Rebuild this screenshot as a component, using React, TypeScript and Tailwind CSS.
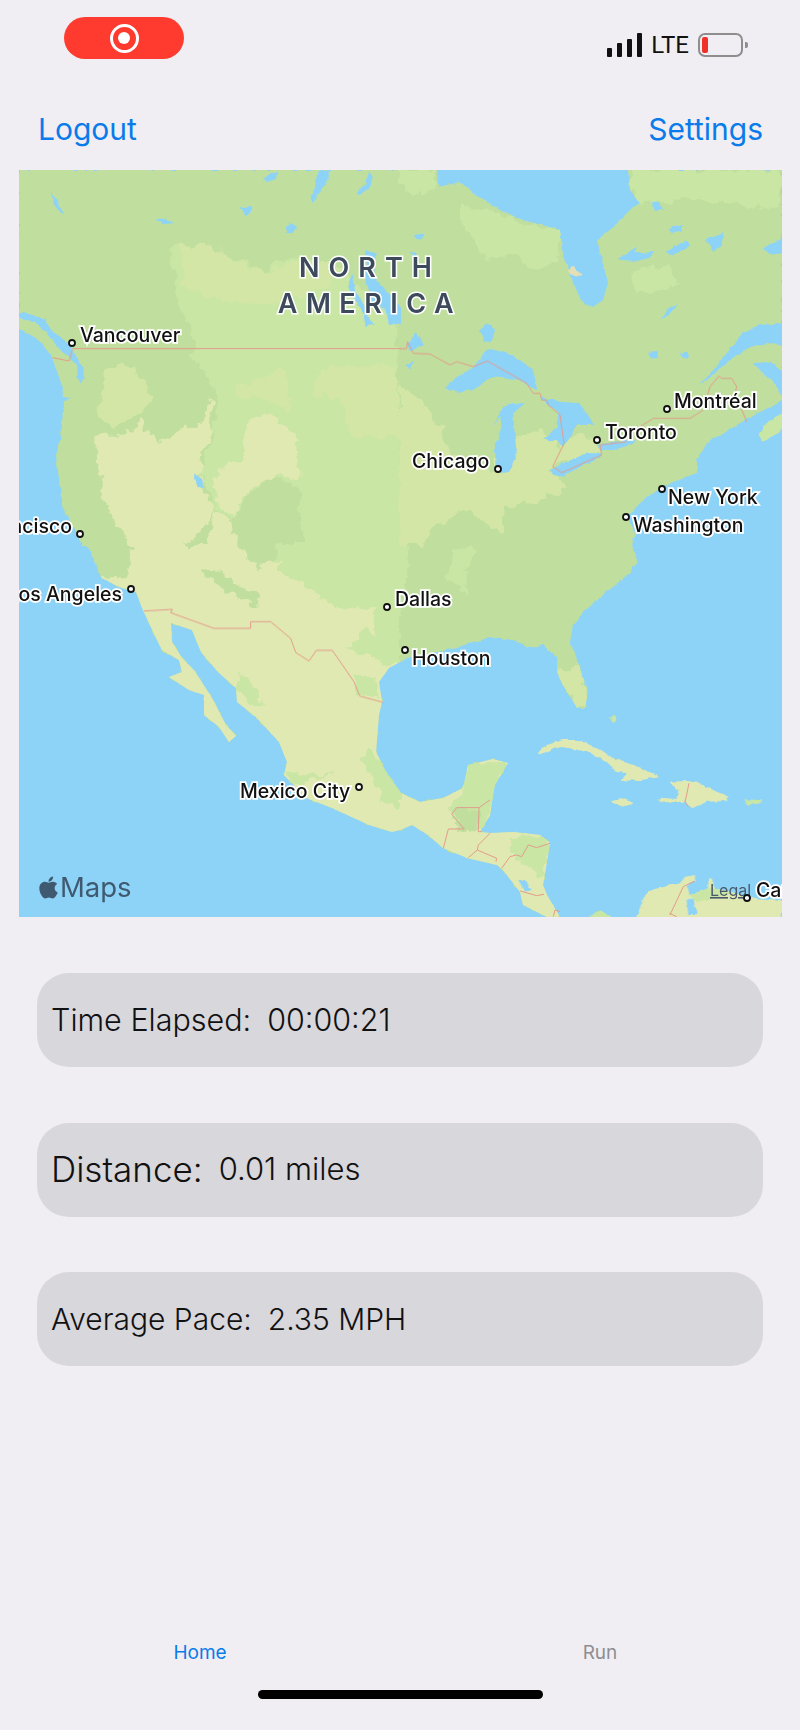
import { FaApple } from 'react-icons/fa';

const FONT = 'font-[Inter,sans-serif]';

const OCEAN = '#8dd3f7';
const BASE = '#c0df9e';
const LIGHT = '#c9e6a5';
const PALE = '#d3e6a6';
const TAN = '#e1e9b2';

// map is 763x747, the point lists below are in 3x crops of each quadrant
const LAND =
  '0,0 763,0 763,230 714,257 688,273 678,290 678,303 658,310 644,317 624,330 608,347 616,363 613,375 619,392 608,405 588,422 568,438 554,455 551,472 561,498 569,522 566,538 558,538 544,515 538,502 538,488 524,475 511,478 494,470 474,467 454,472 438,478 388,488 381,492 370,498 360,512 363,532 360,545 357,582 367,602 382,623 401,632 424,628 444,618 449,595 474,589 489,593 476,615 473,632 471,645 461,662 471,663 494,662 521,665 531,673 528,692 524,715 528,725 541,747 528,747 504,735 501,722 484,700 478,695 448,688 424,678 409,665 393,655 381,660 373,662 350,655 313,638 287,628 265,605 268,592 260,572 237,547 218,532 217,518 200,503 182,482 173,460 152,453 153,472 163,488 175,500 193,528 207,555 217,566 210,572 200,557 185,545 185,525 170,520 150,507 163,502 160,490 143,480 137,468 123,438 117,422 100,417 83,408 68,375 63,375 45,340 41,317 37,285 42,267 45,227 42,213 33,187 20,170 0,158';

const HUDSON =
  '418,0 419,17 441,12 461,28 481,40 504,50 541,60 544,83 554,113 564,133 574,137 584,130 589,113 578,70 591,60 614,37 621,33 611,20 609,0';

const q1Terrain: [string, string][] = [
  [LIGHT, '450,230 480,222 520,235 580,222 600,255 650,268 735,305 770,275 850,262 985,300 1000,340 1130,400 1140,700 1146,1125 850,1125 840,950 760,920 700,960 640,1050 590,1010 540,900 580,800 600,680 520,560 530,535 490,430 470,330 460,270'],
  [PALE, '480,225 580,225 640,270 735,310 850,265 980,295 920,350 780,400 640,400 560,380 490,340'],
  [PALE, '900,590 1130,590 1146,800 1000,800 960,690 880,670'],
  [PALE, '240,740 260,600 300,570 370,620 400,690 350,740 280,770'],
  [PALE, '650,650 740,620 790,590 820,680 810,730 730,680 670,690'],
  [TAN, '680,760 740,730 830,790 840,930 770,915 700,950 640,1040 590,990 590,900 670,870'],
  [TAN, '225,800 250,790 300,800 370,750 420,820 470,790 490,760 530,780 580,680 580,790 540,860 550,950 590,1010 570,1060 500,1125 330,1125 280,1050 250,960 230,820'],
  [TAN, '560,1125 590,1015 640,1055 650,1125'],
  [BASE, '650,1125 680,1000 750,930 800,960 830,1125'],
];

const q2Terrain: [string, string][] = [
  [LIGHT, '0,0 110,0 115,45 60,70 0,60'],
  [LIGHT, '180,100 300,130 400,170 480,190 470,280 400,300 350,250 260,270 180,150'],
  [LIGHT, '690,0 1146,0 1146,120 900,90 720,100 690,60'],
  [LIGHT, '700,300 800,290 840,340 760,370 700,360'],
  [PALE, '0,650 60,680 120,760 150,860 280,900 290,840 350,800 430,780 490,830 480,870 445,900 500,950 400,1000 320,1010 300,1085 200,1020 120,1060 60,1125 0,1125'],
  [PALE, '490,800 590,800 600,850 470,885 480,850'],
];

const q3Terrain: [string, string][] = [
  [LIGHT, '770,0 1146,0 1146,360 980,360 980,320 770,100'],
  [TAN, '340,0 650,0 720,70 790,40 770,90 850,110 950,190 1060,190 1070,270 1030,260 980,320 1060,330 1090,360 1146,350 1146,1125 0,1125 0,100 250,100 320,100'],
  [BASE, '540,80 590,70 680,130 715,140 715,185 640,150 580,110'],
  [LIGHT, '660,375 700,420 740,490 690,480 660,440'],
  [LIGHT, '1010,390 1070,400 1075,450 1020,450'],
  [LIGHT, '1020,640 1060,620 1146,730 1146,800 1100,780 1060,700'],
  [LIGHT, '800,680 950,690 900,700 820,720'],
];

const q4Terrain: [string, string][] = [
  [TAN, '0,640 480,640 480,1125 0,1125'],
  [LIGHT, '200,660 325,650 280,760 265,860 170,840 150,790 190,730'],
  [BASE, '160,800 240,790 235,860 170,850'],
  [LIGHT, '330,880 420,870 450,895 430,1000 380,960 330,930'],
  [PALE, '470,380 540,360 570,490 530,490 480,410'],
  [LIGHT, '160,20 210,0 230,20 190,70 200,150 170,120 140,100'],
  [LIGHT, '0,0 25,0 20,120 0,200'],
];

const q1Water = [
  '0,425 40,435 80,450 95,480 130,505 155,530 190,590 195,620 185,640 175,620 175,590 150,560 115,530 85,490 50,460 0,440',
  '130,680 155,685 135,690',
  '95,68 110,85 135,130 125,130 105,100',
  '410,148 440,145 465,160 430,162',
  '660,110 680,115 705,105 690,135 680,138',
  '800,175 815,160 838,170 815,190 805,188',
  '735,25 755,10 775,8 770,28 745,35',
  '895,5 935,0 925,30 900,70 880,100 875,80 890,45',
  '1010,70 1040,40 1050,5 1062,20 1050,55 1020,75',
  '1040,240 1070,250 1065,320 1100,360 1146,410 1146,460 1110,465 1100,420 1060,400 1040,340',
  '985,350 1000,310 1010,360 1040,420 1065,465 1040,468 1030,420 995,370',
  '525,910 545,925 555,955 535,950',
];

const q2Water = [
  '135,655 165,625 220,590 265,535 340,555 400,600 412,660 390,650 360,630 300,620 260,630 220,660 175,665',
  '310,710 345,700 375,700 340,730 345,800 350,850 330,900 310,912 287,900 285,830 305,780 300,740 280,765',
  '420,680 480,695 540,700 582,765 530,765 520,790 490,830 470,810 430,810 470,770 475,730 440,700',
  '450,900 500,875 560,850 605,850 600,865 540,890 490,920 460,915',
  '590,825 640,815 710,810 690,825 640,840 600,840',
  '240,480 262,460 285,480 275,515 250,515',
  '20,520 50,490 70,525 40,540 30,545',
  '15,590 45,570 30,595',
  '45,195 75,190 65,208 50,208',
  '30,245 50,250 40,262',
  '755,95 775,95 792,120 765,120',
  '805,175 850,165 845,185 815,190',
  '800,245 860,210 870,230 830,250 810,255',
  '655,265 710,230 705,250 770,245 745,265 700,275 660,272',
  '915,210 970,190 965,225 940,245',
  '1090,235 1135,210 1146,200 1146,250 1105,255',
  '785,450 805,415 835,400 810,430',
  '745,550 770,545 775,565 750,565',
  '840,550 860,545 868,565 850,565',
  '890,650 940,600 980,550 1030,490 1080,465 1146,460 1146,530 1120,520 1050,530 990,570 930,620',
  '1060,580 1110,575 1146,600 1146,680 1125,640 1090,610',
  '1000,770 1040,755 1146,690 1146,730 1100,760 1075,790 1000,800',
];

const islands: [string, string][] = [
  ['#e5dfb5', '500,300 520,290 545,315 525,320'],
  [LIGHT, '1075,790 1100,760 1146,730 1146,780 1100,810 1085,815'],
];

const q4Land: [string, string][] = [
  [TAN, '410,625 440,600 490,585 540,585 600,615 640,640 700,660 770,690 775,697 720,705 660,708 680,685 650,680 620,650 560,620 510,610 470,605 420,628'],
  [TAN, '805,710 860,708 890,710 950,740 988,755 980,768 920,770 880,790 855,770 800,772 770,765 780,758 830,762 835,735'],
  [TAN, '630,765 665,760 702,775 670,785 640,775'],
  [LIGHT, '1030,763 1085,765 1085,775 1040,780'],
  [LIGHT, '630,520 640,510 650,525 640,535'],
  [TAN, '705,1125 740,1040 790,1025 840,1015 855,995 885,990 885,1005 860,1020 870,1050 925,1030 925,1000 935,1000 945,1030 1070,1060 1146,1065 1146,1125'],
  [LIGHT, '870,1050 925,1030 945,1030 1000,1045 940,1060 890,1070'],
  [LIGHT, '555,1125 600,1095 650,1125'],
  [OCEAN, '860,1070 880,1060 890,1110 865,1110'],
  [OCEAN, '355,1005 375,1005 395,1035 375,1040'],
];

const q1Borders = ['160,536 1146,536', '100,563 150,573 160,540'];
const q2Borders = [
  '0,536 20,536 22,515 40,550 90,552 150,585 170,575 220,590 262,573 380,640 400,670 420,670 425,690 440,690 445,705 480,735 492,820 458,890 485,908 605,855 600,825 680,815',
  '720,770 760,745 870,745 910,720 930,650 957,618 965,625 995,625 1010,650 1005,670 1040,755',
];
const q3Borders = ['375,198 460,193 455,203 585,250 695,250 695,230 755,230 815,280 830,322 870,348 892,316 940,316 1005,410 1022,453 1092,472'];
const q4Borders = [
  '130,910 145,852 193,852 155,808 170,788 237,788 270,765',
  '237,788 235,860 245,860',
  '270,865 235,900 232,915 205,938',
  '232,915 290,940 288,950',
  '305,970 330,935 350,930 365,935 385,900 410,908 450,895',
  '360,1038 410,1052 432,1048',
  '867,715 860,750 855,770 865,785',
  '460,1115 465,1095 480,1100',
  '810,1110 850,1025 885,1008',
  '808,1105 830,1115',
];

const cities: [number, number][] = [
  [53, 173], [479, 299], [578, 270], [648, 239], [643, 319], [607, 347], [61, 364], [112, 419], [368, 437], [386, 480], [340, 617], [728, 728],
];

const labels: { text: string; x: number; y: number; end?: boolean }[] = [
  { text: 'Vancouver', x: 61, y: 172 },
  { text: 'Chicago', x: 393, y: 298 },
  { text: 'Toronto', x: 586, y: 269 },
  { text: 'Montréal', x: 655, y: 238 },
  { text: 'New York', x: 649, y: 334 },
  { text: 'Washington', x: 614, y: 362 },
  { text: 'San Francisco', x: 53, y: 363, end: true },
  { text: 'Los Angeles', x: 103, y: 431, end: true },
  { text: 'Dallas', x: 376, y: 436 },
  { text: 'Houston', x: 393, y: 495 },
  { text: 'Mexico City', x: 221, y: 628 },
  { text: 'Caracas', x: 737, y: 727 },
];

function Polys({ items }: { items: [string, string][] }) {
  return (
    <>
      {items.map(([fill, points], i) => (
        <polygon key={i} fill={fill} points={points} />
      ))}
    </>
  );
}

function Water({ items }: { items: string[] }) {
  return (
    <>
      {items.map((points, i) => (
        <polygon key={i} fill={OCEAN} points={points} />
      ))}
    </>
  );
}

function Borders({ items }: { items: string[] }) {
  return (
    <>
      {items.map((points, i) => (
        <polyline key={i} fill="none" stroke="#e39c8c" strokeWidth={3} points={points} />
      ))}
    </>
  );
}

function NorthAmericaMap() {
  const q1 = 'scale(0.3333)';
  const q2 = 'translate(381 0) scale(0.3333)';
  const q3 = 'translate(0 375) scale(0.3333)';
  const q4 = 'translate(381 375) scale(0.3333)';
  return (
    <svg viewBox="0 0 763 747" className="w-[763px] h-[747px] block">
      <defs>
        <clipPath id="land">
          <polygon points={LAND} />
        </clipPath>
        {/* rough edges so the shapes read as terrain and coast, not polygons */}
        <filter id="terrain" filterUnits="userSpaceOnUse" x="-20" y="-20" width="803" height="787">
          <feTurbulence type="fractalNoise" baseFrequency="0.09" numOctaves="3" seed="4" />
          <feDisplacementMap in="SourceGraphic" scale="14" xChannelSelector="R" yChannelSelector="G" />
          <feGaussianBlur stdDeviation="0.5" />
        </filter>
        <filter id="coast" filterUnits="userSpaceOnUse" x="-20" y="-20" width="803" height="787">
          <feTurbulence type="fractalNoise" baseFrequency="0.15" numOctaves="2" seed="9" />
          <feDisplacementMap in="SourceGraphic" scale="4" xChannelSelector="R" yChannelSelector="G" />
          <feGaussianBlur stdDeviation="0.3" />
        </filter>
      </defs>
      <rect width="763" height="747" fill={OCEAN} />
      <g filter="url(#coast)">
        <polygon points={LAND} fill={BASE} />
      </g>
      <g clipPath="url(#land)">
        <g filter="url(#terrain)">
          <g transform={q1}><Polys items={q1Terrain} /></g>
          <g transform={q2}><Polys items={q2Terrain} /></g>
          <g transform={q3}><Polys items={q3Terrain} /></g>
          <g transform={q4}><Polys items={q4Terrain} /></g>
        </g>
      </g>
      <g filter="url(#coast)">
        <polygon points={HUDSON} fill={OCEAN} />
        <g transform={q1}><Water items={q1Water} /></g>
        <g transform={q2}><Water items={q2Water} /><Polys items={islands} /></g>
        <g transform={q4}><Polys items={q4Land} /></g>
      </g>
      <g transform={q1}><Borders items={q1Borders} /></g>
      <g transform={q2}><Borders items={q2Borders} /></g>
      <g transform={q3}><Borders items={q3Borders} /></g>
      <g transform={q4}><Borders items={q4Borders} /></g>

      <text x="351" y="107" textAnchor="middle" fontSize="27" fontWeight="600" letterSpacing="9" fill="#3d4a5c" stroke="#fff" strokeWidth="3" paintOrder="stroke" className={FONT}>NORTH</text>
      <text x="351" y="143" textAnchor="middle" fontSize="27" fontWeight="600" letterSpacing="8.5" fill="#3d4a5c" stroke="#fff" strokeWidth="3" paintOrder="stroke" className={FONT}>AMERICA</text>

      <text x="691" y="726" fontSize="16" fill="#4a5a6a" textDecoration="underline" className={FONT}>Legal</text>

      {labels.map((l) => (
        <text
          key={l.text}
          x={l.x}
          y={l.y}
          textAnchor={l.end ? 'end' : 'start'}
          fontSize="19.5"
          fontWeight="500"
          fill="#111"
          stroke="#fff"
          strokeWidth="3.5"
          paintOrder="stroke"
          className={FONT}
        >
          {l.text}
        </text>
      ))}
      {cities.map(([cx, cy]) => (
        <circle key={`${cx}-${cy}`} cx={cx} cy={cy} r="3" fill="#fff" stroke="#111" strokeWidth="1.8" />
      ))}

      <FaApple x={17} y={705} size={25} color="#3f5a70" />
      <text x="41" y="727" fontSize="27.5" fill="#3f5a70" className={FONT}>Maps</text>
    </svg>
  );
}

function SignalBars() {
  return (
    <div className="flex items-end gap-[5px] h-[24px]">
      <div className="w-[5px] h-[9px] bg-[#111] rounded-[1px]" />
      <div className="w-[5px] h-[14px] bg-[#111] rounded-[1px]" />
      <div className="w-[5px] h-[18px] bg-[#111] rounded-[1px]" />
      <div className="w-[5px] h-[24px] bg-[#111] rounded-[1px]" />
    </div>
  );
}

function Battery() {
  return (
    <div className="flex items-center gap-[2px]">
      <div className="w-[45px] h-[24px] border-2 border-[#8e8e8e] rounded-[7px] p-[2px]">
        <div className="w-[6px] h-full bg-[#f0302a] rounded-[2px]" />
      </div>
      <div className="w-[3px] h-[6px] bg-[#8e8e8e] rounded-r-[2px]" />
    </div>
  );
}

function StatPill({ children }: { children: React.ReactNode }) {
  return (
    <div className="h-[94px] rounded-[32px] bg-[#d8d7dc] px-[14px] flex items-center gap-[16px] text-[30px] font-light text-[#111]">
      {children}
    </div>
  );
}

export default function App() {
  return (
    <div className={`w-[800px] h-[1730px] bg-[#f0eef2] flex flex-col ${FONT}`}>
      <div className="h-[170px] relative">
        <div className="flex items-start justify-between pl-[64px] pr-[52px] pt-[17px]">
          <div className="w-[120px] h-[42px] bg-[#ff3b30] rounded-[21px] flex items-center justify-center">
            <div className="w-[29px] h-[29px] rounded-full border-[3px] border-white flex items-center justify-center">
              <div className="w-[12px] h-[12px] rounded-full bg-white" />
            </div>
          </div>
          <div className="flex items-end gap-[9px] pt-[16px]">
            <SignalBars />
            <span className="text-[24px] leading-[24px] text-[#111] font-[Roboto,sans-serif]">LTE</span>
            <Battery />
          </div>
        </div>
        <div className="flex justify-between pl-[38px] pr-[37px] mt-[52px] text-[30px] leading-[36px] text-[#0a7bea]">
          <span>Logout</span>
          <span>Settings</span>
        </div>
      </div>

      <div className="mx-[19px]">
        <NorthAmericaMap />
      </div>

      <div className="mx-[37px] mt-[56px] flex flex-col gap-[55.5px]">
        <StatPill>
          <span className="text-[30.5px]">Time Elapsed:</span>
          <span className="text-[30.5px]">00:00:21</span>
        </StatPill>
        <StatPill>
          <span className="text-[35px]">Distance:</span>
          <span className="text-[31px]">0.01 miles</span>
        </StatPill>
        <StatPill>
          <span>Average Pace:</span>
          <span>2.35 MPH</span>
        </StatPill>
      </div>

      <div className="mt-auto flex h-[50px] text-[19px]">
        <div className="w-1/2 text-center text-[#0a7bea]">Home</div>
        <div className="w-1/2 text-center text-[#8e8e93]">Run</div>
      </div>
      <div className="h-[27px] flex justify-center">
        <div className="w-[285px] h-[9px] rounded-full bg-black mt-[1px]" />
      </div>
      <div className="h-[14px]" />
    </div>
  );
}
